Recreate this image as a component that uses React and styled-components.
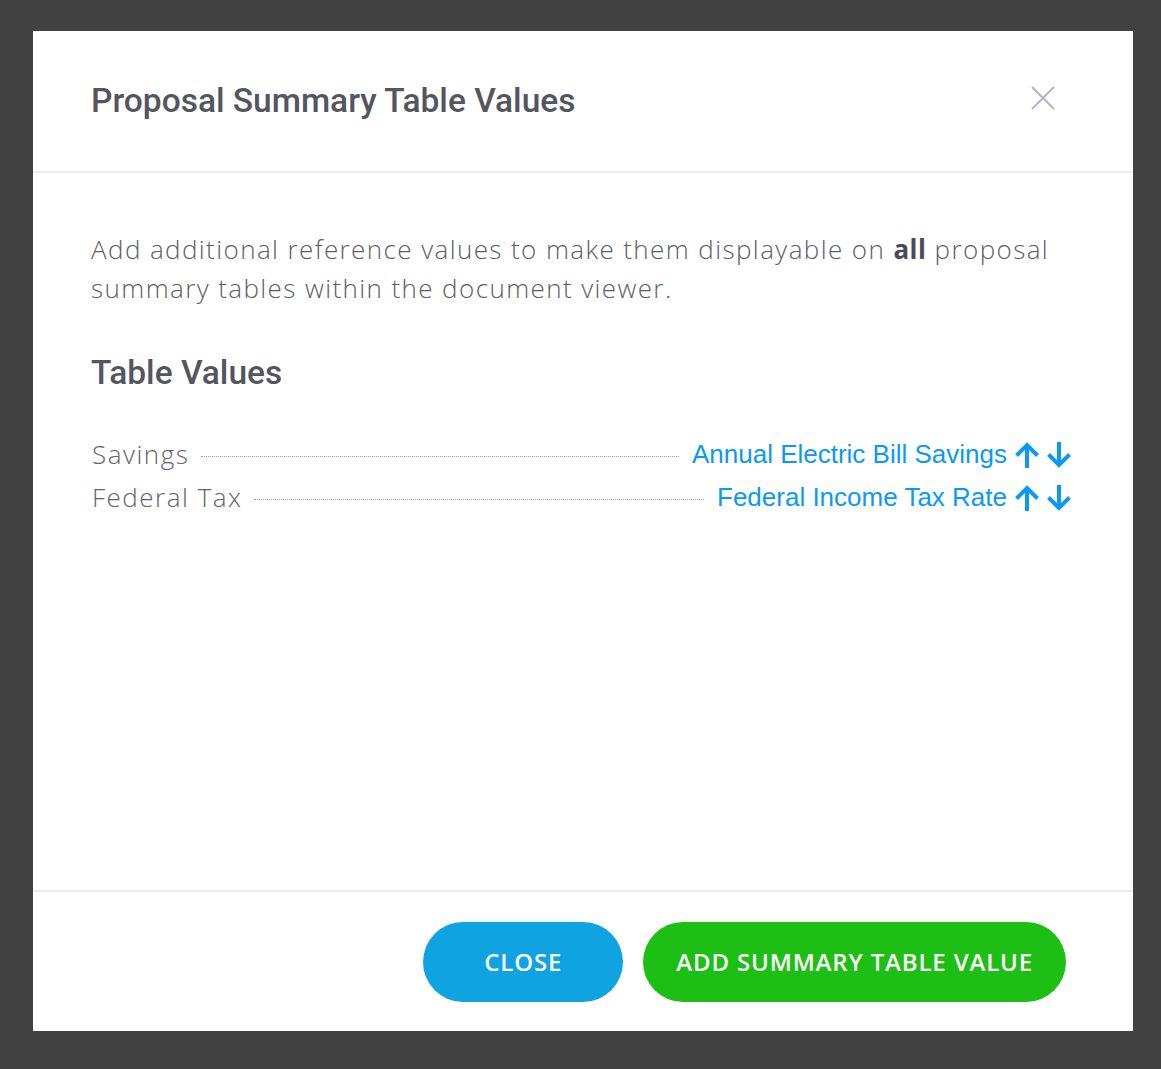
import React from 'react';
import styled, { createGlobalStyle } from 'styled-components';

const GlobalStyle = createGlobalStyle`
  html, body { margin: 0; padding: 0; }
  body {
    background: #414141;
    font-family: 'Open Sans', 'Liberation Sans', sans-serif;
  }
  * { box-sizing: border-box; }
`;

// dimmed page behind the modal
const Backdrop = styled.div`
  width: 1161px;
  height: 1069px;
  background: #414141;
  padding: 31px 28px 38px 33px;
  display: flex;
`;

const Modal = styled.div`
  flex: 1;
  background: #fff;
  display: flex;
  flex-direction: column;
`;

const Header = styled.div`
  height: 142px;
  padding: 0 78px 0 58px;
  display: flex;
  align-items: center;
  justify-content: space-between;
  border-bottom: 2px solid #ececf1;
`;

const Title = styled.h2`
  margin: 0;
  font-family: Roboto, 'Liberation Sans', sans-serif;
  font-weight: 500;
  font-size: 33.5px;
  line-height: 40px;
  color: #53555f;
`;

const CloseX = styled.button`
  border: 0;
  background: none;
  padding: 0;
  width: 24px;
  height: 24px;
  margin-top: -6px;
  display: flex;
  cursor: pointer;
`;

const Body = styled.div`
  flex: 1;
  padding: 57px 60px 0 58px;
`;

const Intro = styled.p`
  margin: 0;
  font-family: 'Open Sans', sans-serif;
  font-weight: 300;
  font-size: 26px;
  letter-spacing: 1.4px;
  line-height: 39px;
  color: #5c5e67;
  b { font-weight: 700; letter-spacing: 0.5px; color: #4a4c55; }
`;

const SectionTitle = styled.h3`
  margin: 45px 0 0;
  font-family: Roboto, 'Liberation Sans', sans-serif;
  font-weight: 500;
  font-size: 33.5px;
  line-height: 40px;
  color: #53555f;
`;

const Rows = styled.div`
  margin-top: 40px;
  display: flex;
  flex-direction: column;
`;

const Row = styled.div`
  display: flex;
  align-items: center;
  height: 43px;
`;

const Label = styled.span`
  font-family: 'Open Sans', sans-serif;
  font-weight: 300;
  font-size: 26px;
  letter-spacing: 1.5px;
  line-height: 30px;
  margin-top: -2px;
  color: #62646c;
  padding-left: 1px;
`;

const Leader = styled.span`
  flex: 1;
  margin: 4px 13px 0 12px;
  border-top: 1.5px dotted #9a9a9a;
`;

const Value = styled.span`
  font-family: 'Liberation Sans', Arial, sans-serif;
  font-size: 26px;
  color: #0a99f5;
  margin-right: 6px;
`;

const ArrowBtn = styled.button`
  border: 0;
  background: none;
  padding: 0;
  width: 28px;
  height: 28px;
  margin-left: ${(p) => (p.$gap ? '4px' : '0')};
  display: flex;
  cursor: pointer;
`;

const Footer = styled.div`
  height: 141px;
  border-top: 2px solid #ececf1;
  padding: 0 67px 0 0;
  display: flex;
  align-items: center;
  justify-content: flex-end;
  gap: 20px;
`;

const Button = styled.button`
  height: 80px;
  min-width: 200px;
  padding: 0 33px;
  border: 0;
  border-radius: 40px;
  background: ${(p) => p.$bg};
  color: #fff;
  font-family: 'Open Sans', sans-serif;
  font-weight: 600;
  font-size: 24px;
  letter-spacing: 0.85px;
  text-transform: uppercase;
  cursor: pointer;
`;

const ArrowIcon = ({ down }) => (
  <svg width="28" height="28" viewBox="0 0 28 28" fill="none">
    <g transform={down ? 'rotate(180 14 14)' : undefined} stroke="#0a99f5" strokeWidth="4">
      <path d="M14 4 V27" />
      <path d="M3.5 14.5 L14 4 L24.5 14.5" />
    </g>
  </svg>
);

const rows = [
  { label: 'Savings', value: 'Annual Electric Bill Savings' },
  { label: 'Federal Tax', value: 'Federal Income Tax Rate' },
];

export default function App() {
  return (
    <>
      <GlobalStyle />
      <Backdrop>
        <Modal>
          <Header>
            <Title>Proposal Summary Table Values</Title>
            <CloseX aria-label="close">
              <svg width="24" height="24" viewBox="0 0 24 24">
                <path d="M1 1 L23 23 M23 1 L1 23" stroke="#b3b3c9" strokeWidth="2" />
              </svg>
            </CloseX>
          </Header>
          <Body>
            <Intro>
              Add additional reference values to make them displayable on <b>all</b> proposal
              summary tables within the document viewer.
            </Intro>
            <SectionTitle>Table Values</SectionTitle>
            <Rows>
              {rows.map((r) => (
                <Row key={r.label}>
                  <Label>{r.label}</Label>
                  <Leader />
                  <Value>{r.value}</Value>
                  <ArrowBtn><ArrowIcon /></ArrowBtn>
                  <ArrowBtn $gap><ArrowIcon down /></ArrowBtn>
                </Row>
              ))}
            </Rows>
          </Body>
          <Footer>
            <Button $bg="#0fa4e1">Close</Button>
            <Button $bg="#1ebf15">Add Summary Table Value</Button>
          </Footer>
        </Modal>
      </Backdrop>
    </>
  );
}
